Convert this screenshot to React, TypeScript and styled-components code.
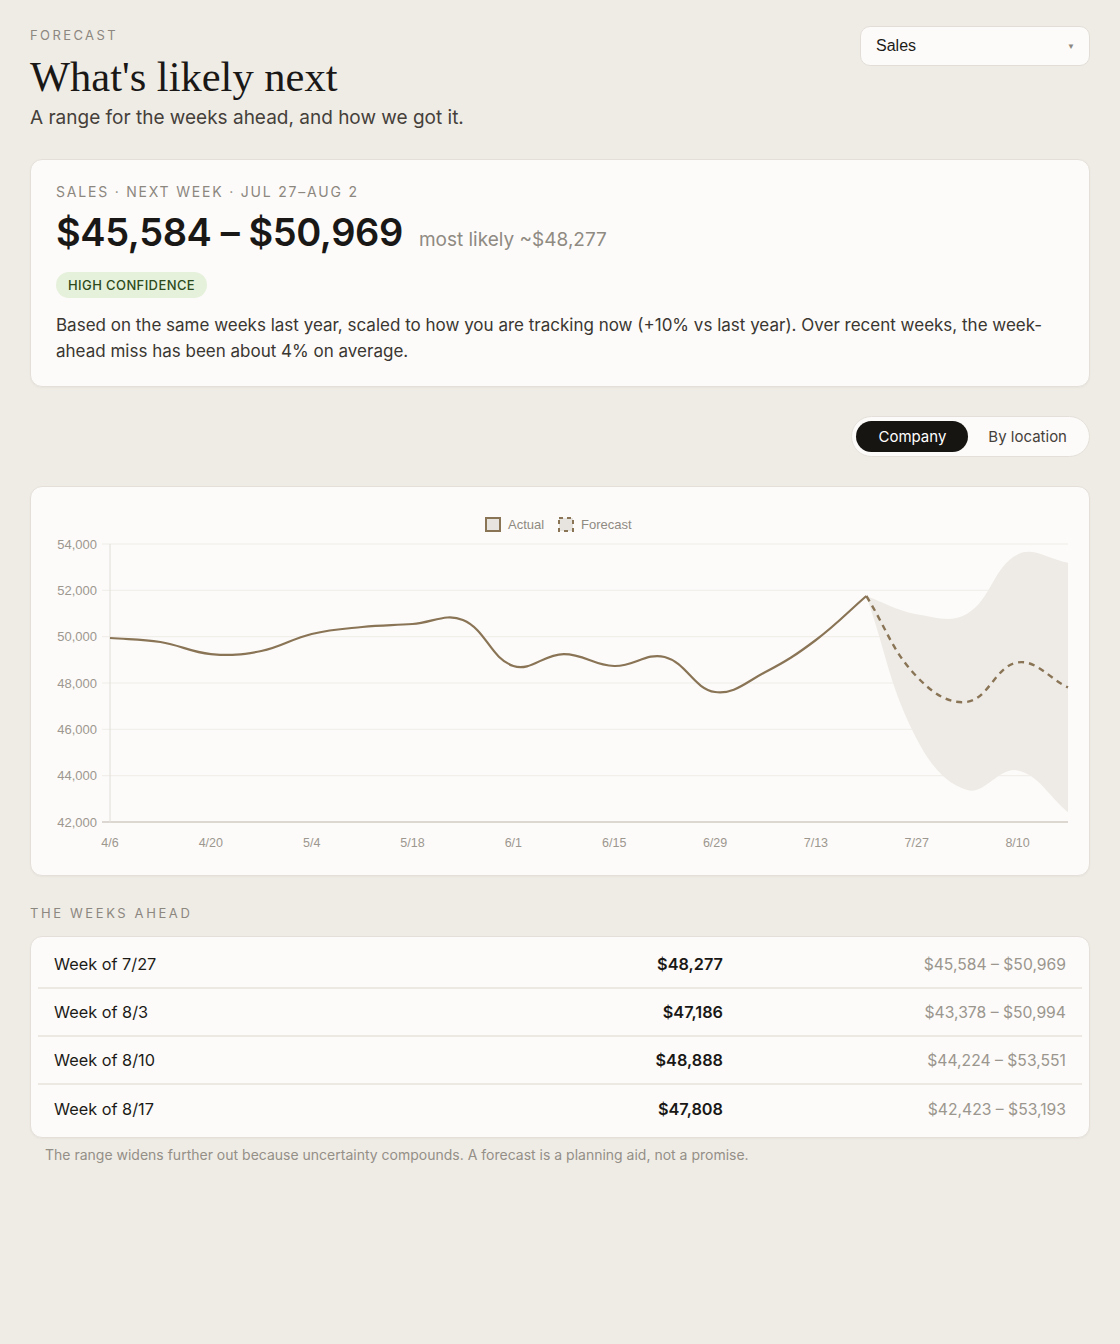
import React from "react";
import styled, { createGlobalStyle } from "styled-components";

const GlobalStyle = createGlobalStyle`
  html, body {
    margin: 0;
    padding: 0;
    background: #efece6;
  }
  body {
    font-family: Inter, "Noto Sans", "Liberation Sans", sans-serif;
    color: #1d1b18;
    -webkit-font-smoothing: antialiased;
  }
`;

const Page = styled.main`
  min-height: 1344px;
  box-sizing: border-box;
  padding: 27px 30px 40px 30px;
`;

const Header = styled.header`
  display: flex;
  justify-content: space-between;
  align-items: flex-start;
`;

const TitleBlock = styled.div`
  display: flex;
  flex-direction: column;
`;

const Eyebrow = styled.div`
  font-size: 13px;
  letter-spacing: 2.4px;
  color: #8c877f;
  text-transform: uppercase;
  line-height: 16px;
`;

const Title = styled.h1`
  margin: 9px 0 0 0;
  font-family: "Liberation Serif", "DejaVu Serif", serif;
  font-weight: 400;
  font-size: 42.5px;
  line-height: 49px;
  color: #1a1816;
`;

const Subtitle = styled.p`
  margin: 4px 0 0 0;
  font-size: 19px;
  line-height: 26px;
  color: #45403a;
`;

const Select = styled.div`
  width: 230px;
  height: 40px;
  box-sizing: border-box;
  margin-top: -1px;
  padding: 0 14px 0 15px;
  display: flex;
  align-items: center;
  justify-content: space-between;
  background: #fcfbf9;
  border: 1px solid #e2ded7;
  border-radius: 10px;
  font-family: "Liberation Sans", Arial, sans-serif;
  font-size: 16px;
  color: #1d1b18;
`;

const Caret = styled.span`
  font-size: 8px;
  color: #8c877f;
`;

const Card = styled.section<{ $pad?: string }>`
  background: #fcfbf9;
  border: 1px solid #e4e0d9;
  border-radius: 12px;
  padding: ${(p) => p.$pad ?? "0"};
  box-shadow: 0 1px 2px rgba(60, 50, 40, 0.04);
`;

const SummaryCard = styled(Card)`
  margin-top: 28px;
`;

const SummaryLabel = styled.div`
  font-size: 14px;
  letter-spacing: 1.8px;
  color: #8c877f;
  line-height: 18px;
`;

const RangeRow = styled.div`
  display: flex;
  align-items: baseline;
  gap: 16px;
  margin-top: 6px;
`;

const RangeValue = styled.div`
  font-size: 38px;
  font-weight: 600;
  letter-spacing: -0.4px;
  line-height: 50px;
  color: #1a1816;
`;

const Likely = styled.div`
  font-size: 19px;
  color: #8f8a82;
`;

const Badge = styled.span`
  display: inline-flex;
  align-items: center;
  height: 26px;
  padding: 0 12px;
  margin-top: 15px;
  border-radius: 999px;
  background: #e5f1db;
  color: #2e4a1c;
  font-size: 13px;
  font-weight: 500;
  letter-spacing: 0.4px;
`;

const Note = styled.p`
  margin: 14px 0 0 0;
  font-size: 17px;
  line-height: 26px;
  color: #3a3631;
`;

const ToggleRow = styled.div`
  display: flex;
  justify-content: flex-end;
  margin-top: 29px;
`;

const Toggle = styled.div`
  display: flex;
  padding: 4px;
  gap: 2px;
  background: #fcfbf9;
  border: 1px solid #e4e0d9;
  border-radius: 999px;
`;

const ToggleButton = styled.button<{ $active?: boolean }>`
  height: 31px;
  padding: 0 ${(p) => (p.$active ? "22px" : "18px")};
  border: none;
  border-radius: 999px;
  font-family: inherit;
  font-size: 15px;
  background: ${(p) => (p.$active ? "#171512" : "transparent")};
  color: ${(p) => (p.$active ? "#ffffff" : "#46413b")};
  cursor: pointer;
`;

const ChartCard = styled(Card)`
  margin-top: 29px;
  height: 390px;
  box-sizing: border-box;
`;

const SectionLabel = styled.div`
  margin-top: 29px;
  font-size: 13px;
  letter-spacing: 2.6px;
  color: #8c877f;
  line-height: 16px;
`;

const TableCard = styled(Card)`
  margin-top: 15px;
  padding: 4px 7px;
`;

const WeekRow = styled.div<{ $last?: boolean }>`
  display: grid;
  grid-template-columns: 1fr 200px 343px;
  align-items: center;
  height: 48px;
  box-sizing: border-box;
  padding: 0 16px;
  border-bottom: ${(p) => (p.$last ? "none" : "2px solid #ece9e3")};
  font-size: 16.3px;
`;

const WeekName = styled.span`
  color: #1d1b18;
`;

const WeekValue = styled.span`
  text-align: right;
  font-weight: 600;
  color: #1a1816;
`;

const WeekRange = styled.span`
  text-align: right;
  font-size: 15.7px;
  color: #9b968e;
`;

const Footnote = styled.p`
  margin: 8px 0 0 0;
  padding: 0 15px;
  font-size: 14px;
  line-height: 18px;
  color: #948f87;
`;

// chart geometry (inside the chart card)
const W = 1056;
const H = 388;
const X0 = 78;
const X1 = 1036;
const Y0 = 57;
const Y1 = 335;
const MIN = 42000;
const MAX = 54000;

const labels = ["4/6", "", "4/20", "", "5/4", "", "5/18", "", "6/1", "", "6/15", "", "6/29", "", "7/13", "", "7/27", "", "8/10", ""];

const actual = [
  49942, 49770, 49250, 49380, 50115, 50417, 50547, 50720, 48734, 49250, 48734, 49122, 47611, 48475, 49856, 51755,
];
const forecast = [51755, 48277, 47186, 48888, 47808];
const upper = [51755, 50969, 50994, 53551, 53193];
const lower = [51755, 45584, 43378, 44224, 42423];

type Pt = { x: number; y: number };

const px = (i: number) => X0 + ((X1 - X0) * i) / (labels.length - 1);
const py = (v: number) => Y0 + ((MAX - v) / (MAX - MIN)) * (Y1 - Y0);

const toPts = (vals: number[], start: number): Pt[] => vals.map((v, i) => ({ x: px(start + i), y: py(v) }));

// same tension spline chart.js uses for line datasets
function splinePath(pts: Pt[], tension = 0.4, move = true) {
  const cps = pts.map((cur, i) => {
    const prev = pts[i - 1] ?? cur;
    const next = pts[i + 1] ?? cur;
    const d01 = Math.hypot(cur.x - prev.x, cur.y - prev.y);
    const d12 = Math.hypot(next.x - cur.x, next.y - cur.y);
    const tot = d01 + d12 || 1;
    const fa = (tension * d01) / tot;
    const fb = (tension * d12) / tot;
    return {
      prev: { x: cur.x - fa * (next.x - prev.x), y: cur.y - fa * (next.y - prev.y) },
      next: { x: cur.x + fb * (next.x - prev.x), y: cur.y + fb * (next.y - prev.y) },
    };
  });
  let d = move ? `M${pts[0].x},${pts[0].y}` : `L${pts[0].x},${pts[0].y}`;
  for (let i = 1; i < pts.length; i++) {
    const a = cps[i - 1].next;
    const b = cps[i].prev;
    d += ` C${a.x},${a.y} ${b.x},${b.y} ${pts[i].x},${pts[i].y}`;
  }
  return d;
}

const LINE = "#8a7456";
const TICK = "#9c978f";

function ForecastChart() {
  const ticks = [54000, 52000, 50000, 48000, 46000, 44000, 42000];
  const up = toPts(upper, 15);
  const low = toPts(lower, 15).reverse();
  const band = splinePath(up) + " " + splinePath(low, 0.4, false) + " Z";

  return (
    <svg width="100%" height={H} viewBox={`0 0 ${W} ${H}`} style={{ display: "block" }}>
      <g fontFamily="'Liberation Sans', Arial, sans-serif" fontSize="13">
        <rect x="454" y="31" width="14" height="13" fill="#e7e4df" stroke={LINE} strokeWidth="2" />
        <text x="476" y="42" fill="#8f8a82">Actual</text>
        <rect x="527" y="31" width="14" height="13" fill="#e7e4df" stroke={LINE} strokeWidth="2" strokeDasharray="4 4" />
        <text x="549" y="42" fill="#8f8a82">Forecast</text>
      </g>

      {ticks.map((t) => (
        <g key={t}>
          <line x1={X0 - 8} x2={X1} y1={py(t)} y2={py(t)} stroke={t === MIN ? "#dcd8d1" : "#f0ede8"} strokeWidth={t === MIN ? 2 : 1} />
          <text
            x={X0 - 13}
            y={py(t) + 4.5}
            textAnchor="end"
            fontFamily="'Liberation Sans', Arial, sans-serif"
            fontSize="13"
            fill={TICK}
          >
            {t.toLocaleString("en-US")}
          </text>
        </g>
      ))}
      <line x1={X0} x2={X0} y1={Y0} y2={Y1 + 1} stroke="#e2ded8" strokeWidth="1" />

      {labels.map((l, i) =>
        l ? (
          <text
            key={l}
            x={px(i)}
            y={360}
            textAnchor="middle"
            fontFamily="'Liberation Sans', Arial, sans-serif"
            fontSize="12.5"
            fill={TICK}
          >
            {l}
          </text>
        ) : null,
      )}

      <path d={band} fill="#eeebe6" />
      <path d={splinePath(toPts(actual, 0))} fill="none" stroke={LINE} strokeWidth="2.2" />
      <path d={splinePath(toPts(forecast, 15))} fill="none" stroke={LINE} strokeWidth="2.4" strokeDasharray="6 5" />
    </svg>
  );
}

const weeks = [
  { name: "Week of 7/27", value: "$48,277", range: "$45,584 – $50,969" },
  { name: "Week of 8/3", value: "$47,186", range: "$43,378 – $50,994" },
  { name: "Week of 8/10", value: "$48,888", range: "$44,224 – $53,551" },
  { name: "Week of 8/17", value: "$47,808", range: "$42,423 – $53,193" },
];

export default function App() {
  const [view, setView] = React.useState<"company" | "location">("company");

  return (
    <>
      <GlobalStyle />
      <Page>
        <Header>
          <TitleBlock>
            <Eyebrow>Forecast</Eyebrow>
            <Title>What's likely next</Title>
            <Subtitle>A range for the weeks ahead, and how we got it.</Subtitle>
          </TitleBlock>
          <Select role="listbox">
            <span>Sales</span>
            <Caret>▼</Caret>
          </Select>
        </Header>

        <SummaryCard $pad="23px 25px 22px 25px">
          <SummaryLabel>SALES · NEXT WEEK · JUL 27–AUG 2</SummaryLabel>
          <RangeRow>
            <RangeValue>$45,584 – $50,969</RangeValue>
            <Likely>most likely ~$48,277</Likely>
          </RangeRow>
          <Badge>HIGH CONFIDENCE</Badge>
          <Note>
            Based on the same weeks last year, scaled to how you are tracking now (+10% vs last year). Over recent
            weeks, the week-ahead miss has been about 4% on average.
          </Note>
        </SummaryCard>

        <ToggleRow>
          <Toggle>
            <ToggleButton $active={view === "company"} onClick={() => setView("company")}>
              Company
            </ToggleButton>
            <ToggleButton $active={view === "location"} onClick={() => setView("location")}>
              By location
            </ToggleButton>
          </Toggle>
        </ToggleRow>

        <ChartCard>
          <ForecastChart />
        </ChartCard>

        <SectionLabel>THE WEEKS AHEAD</SectionLabel>
        <TableCard>
          {weeks.map((w, i) => (
            <WeekRow key={w.name} $last={i === weeks.length - 1}>
              <WeekName>{w.name}</WeekName>
              <WeekValue>{w.value}</WeekValue>
              <WeekRange>{w.range}</WeekRange>
            </WeekRow>
          ))}
        </TableCard>
        <Footnote>
          The range widens further out because uncertainty compounds. A forecast is a planning aid, not a promise.
        </Footnote>
      </Page>
    </>
  );
}
